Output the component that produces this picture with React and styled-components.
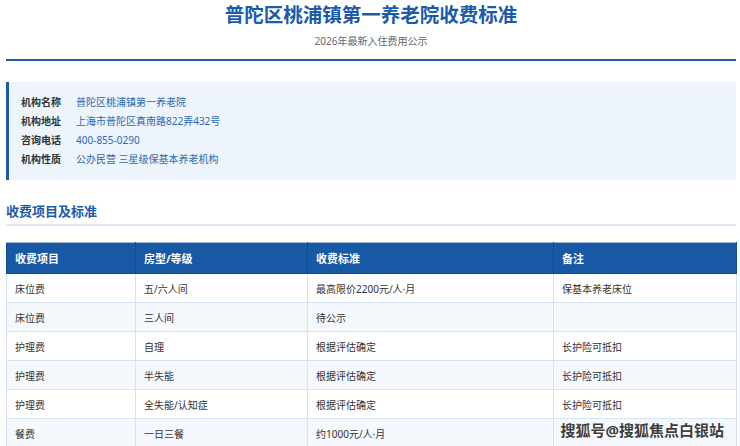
import React from "react";
import styled, { createGlobalStyle } from "styled-components";

const GlobalStyle = createGlobalStyle`
  html, body {
    margin: 0;
    padding: 0;
    background: #ffffff;
    overflow: hidden;
  }
  body {
    font-family: "Noto Sans", "Noto Sans CJK SC", sans-serif;
    color: #333;
  }
`;

const Page = styled.div`
  position: relative;
  width: 740px;
  height: 446px;
  box-sizing: border-box;
  padding: 0 4px 0 6px;
`;

const Header = styled.header`
  text-align: center;
  padding-top: 2px;
  padding-bottom: 10px;
  border-bottom: 2px solid #1b5ba8;
`;

const Title = styled.h1`
  margin: 0;
  font-size: 19.5px;
  line-height: 26px;
  font-weight: 700;
  color: #1b5ba8;
`;

const Subtitle = styled.div`
  margin-top: 5px;
  font-size: 10px;
  line-height: 16px;
  color: #666;
`;

const InfoBox = styled.section`
  margin-top: 21px;
  padding: 11px 12px;
  background: #eef4fb;
  border-left: 3px solid #1b5ba8;
`;

const InfoRow = styled.div`
  display: flex;
  font-size: 10px;
  line-height: 19px;
`;

const InfoLabel = styled.span`
  width: 55px;
  font-weight: 700;
  color: #333;
`;

const InfoValue = styled.span`
  color: #2a69b2;
`;

const SectionTitle = styled.h2`
  margin: 21px 0 0;
  padding-bottom: 3px;
  font-size: 13px;
  line-height: 20px;
  font-weight: 700;
  color: #1b5ba8;
  border-bottom: 2px solid #dce8f6;
`;

const Table = styled.table`
  margin-top: 16px;
  width: 730px;
  border-collapse: collapse;
  table-layout: fixed;
  font-size: 10px;
`;

const HeadCell = styled.th`
  height: 31px;
  box-sizing: border-box;
  padding: 0 8px;
  text-align: left;
  font-size: 11px;
  font-weight: 700;
  color: #fff;
  background: #1859a5;
  border: 1px solid #134b8c;
  border-top-color: #9fb6d3;
`;

const Row = styled.tr`
  background: ${(p) => (p.$alt ? "#f5f9fe" : "#ffffff")};
`;

const Cell = styled.td`
  height: 29px;
  box-sizing: border-box;
  padding: 0 8px;
  color: #333;
  border: 1px solid #d4e3f4;
`;

const Watermark = styled.div`
  position: absolute;
  right: 16px;
  top: 421px;
  font-size: 15px;
  line-height: 18px;
  font-weight: 700;
  color: #3d3d3d;
  text-shadow: 0 0 2px #fff, 0 0 1px #fff;
`;

const info = [
  ["机构名称", "普陀区桃浦镇第一养老院"],
  ["机构地址", "上海市普陀区真南路822弄432号"],
  ["咨询电话", "400-855-0290"],
  ["机构性质", "公办民营 三星级保基本养老机构"],
];

const cols = [129, 172, 246, 183];
const heads = ["收费项目", "房型/等级", "收费标准", "备注"];

const rows = [
  ["床位费", "五/六人间", "最高限价2200元/人·月", "保基本养老床位"],
  ["床位费", "三人间", "待公示", ""],
  ["护理费", "自理", "根据评估确定", "长护险可抵扣"],
  ["护理费", "半失能", "根据评估确定", "长护险可抵扣"],
  ["护理费", "全失能/认知症", "根据评估确定", "长护险可抵扣"],
  ["餐费", "一日三餐", "约1000元/人·月", ""],
];

export default function App() {
  return (
    <Page>
      <GlobalStyle />
      <Header>
        <Title>普陀区桃浦镇第一养老院收费标准</Title>
        <Subtitle>2026年最新入住费用公示</Subtitle>
      </Header>

      <InfoBox>
        {info.map(([k, v]) => (
          <InfoRow key={k}>
            <InfoLabel>{k}</InfoLabel>
            <InfoValue>{v}</InfoValue>
          </InfoRow>
        ))}
      </InfoBox>

      <SectionTitle>收费项目及标准</SectionTitle>

      <Table>
        <colgroup>
          {cols.map((w, i) => (
            <col key={i} style={{ width: w }} />
          ))}
        </colgroup>
        <thead>
          <tr>
            {heads.map((h) => (
              <HeadCell key={h}>{h}</HeadCell>
            ))}
          </tr>
        </thead>
        <tbody>
          {rows.map((r, i) => (
            <Row key={i} $alt={i % 2 === 1}>
              {r.map((c, j) => (
                <Cell key={j}>{c}</Cell>
              ))}
            </Row>
          ))}
        </tbody>
      </Table>

      <Watermark>搜狐号@搜狐焦点白银站</Watermark>
    </Page>
  );
}
